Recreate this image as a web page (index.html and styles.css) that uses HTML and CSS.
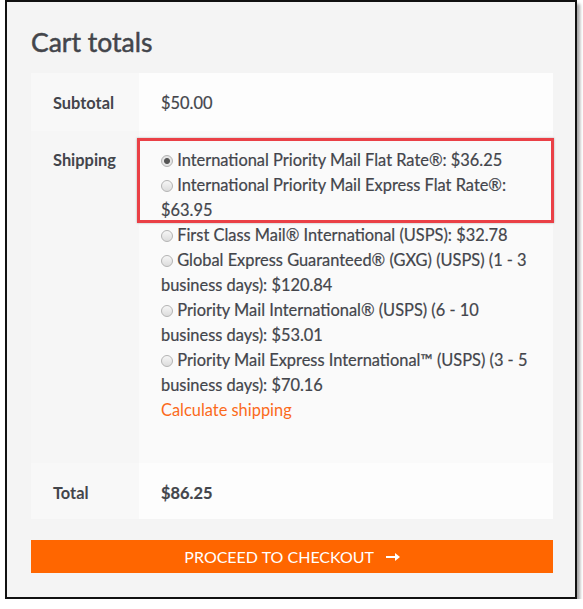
FILE: index.html
```html
<!DOCTYPE html>
<html lang="en">
<head>
  <meta charset="UTF-8">
  <title>Cart totals</title>
  <link rel="stylesheet" href="styles.css">
</head>
<body>
  <div class="frame">
    <div class="cart-totals">
      <h2>Cart totals</h2>

      <table class="totals-table">
        <tr>
          <th>Subtotal</th>
          <td>$50.00</td>
        </tr>
        <tr class="shipping">
          <th>Shipping</th>
          <td>
            <div class="highlight"></div>
            <ul class="shipping-methods">
              <li><label><input type="radio" name="method" checked> International Priority Mail Flat Rate®: $36.25</label></li>
              <li><label><input type="radio" name="method"> International Priority Mail Express Flat Rate®: $63.95</label></li>
              <li><label><input type="radio" name="method"> First Class Mail® International (USPS): $32.78</label></li>
              <li><label><input type="radio" name="method"> Global Express Guaranteed® (GXG) (USPS) (1 - 3 business days): $120.84</label></li>
              <li><label><input type="radio" name="method"> Priority Mail International® (USPS) (6 - 10 business days): $53.01</label></li>
              <li><label><input type="radio" name="method"> Priority Mail Express International™ (USPS) (3 - 5 business days): $70.16</label></li>
            </ul>
            <p class="calc"><a href="#">Calculate shipping</a></p>
          </td>
        </tr>
        <tr class="order-total">
          <th>Total</th>
          <td><strong>$86.25</strong></td>
        </tr>
      </table>

      <a class="checkout-button" href="#">Proceed to checkout
        <svg class="arrow" width="14" height="10" viewBox="0 0 14 10"><path d="M0 4h9V1l5 4-5 4V6H0z" fill="#fff"/></svg>
      </a>
    </div>
  </div>
</body>
</html>
```

FILE: styles.css
```css
body {
  margin: 0;
  background: #ffffff;
  font-family: Lato, "Open Sans", sans-serif;
  color: #43454b;
}

.frame {
  margin-left: 5px;
  width: 568px;
  height: 595px;
  border: 2px solid #111;
  background: #f4f4f4;
  box-shadow: 3px 4px 3px rgba(0,0,0,0.35);
}

.cart-totals {
  padding: 0 22px 0 24px;
}

h2 {
  margin: 0;
  padding-top: 22px;
  font-size: 26.5px;
  font-weight: 400;
  line-height: 36px;
  color: #43454b;
  -webkit-text-stroke: 0.5px #43454b;
}

.totals-table {
  width: 100%;
  margin-top: 13px;
  border-collapse: collapse;
  font-size: 16.4px;
  line-height: 25px;
  -webkit-text-stroke: 0.2px #43454b;
}

.totals-table th,
.totals-table td {
  padding: 17px 22px 16px;
  text-align: left;
  vertical-align: top;
}

.totals-table tr.shipping th,
.totals-table tr.shipping td {
  padding-top: 16px;
}

.totals-table tr.order-total th,
.totals-table tr.order-total td {
  padding: 17px 22px 14px;
}

.totals-table th {
  width: 108px;
  box-sizing: border-box;
  background: #f8f8f8;
  font-weight: 700;
  -webkit-text-stroke: 0;
}

.totals-table td {
  background: #fdfdfd;
}

.totals-table tr.shipping td {
  background: #fafafa;
  position: relative;
}

.totals-table tr.shipping th {
  background: #f6f6f6;
}

.shipping-methods {
  list-style: none;
  margin: 0;
  padding: 0;
}

.shipping-methods input {
  -webkit-appearance: none;
  appearance: none;
  width: 12px;
  height: 12px;
  margin: 0;
  border: 1px solid #b4b4b4;
  border-radius: 50%;
  background: linear-gradient(#f6f6f6, #dcdcdc);
  vertical-align: -1px;
}

.shipping-methods input:checked {
  background: radial-gradient(circle, #555 0, #555 2.5px, #e6e6e6 3.5px, #dcdcdc 100%);
}

.calc {
  margin: 0 0 25px;
}

.calc a {
  color: #fa6a1a;
  text-decoration: none;
  -webkit-text-stroke: 0;
}

.highlight {
  position: absolute;
  left: -2px;
  top: 7px;
  width: 411px;
  height: 79px;
  border: 3px solid #ea4046;
  box-shadow: 0 0 2px rgba(0,0,0,0.3);
}

.checkout-button {
  display: block;
  margin-top: 21px;
  height: 33px;
  line-height: 33px;
  background: #ff6600;
  color: #fff;
  text-align: center;
  text-transform: uppercase;
  text-decoration: none;
  font-size: 16px;
}

.arrow {
  margin-left: 8px;
  vertical-align: 1px;
}
```
